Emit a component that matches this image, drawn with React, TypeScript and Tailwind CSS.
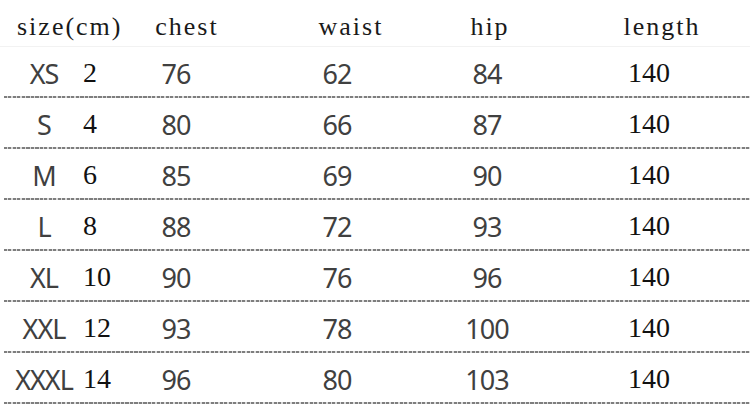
const rows = [
  { size: "XS", num: "2", chest: "76", waist: "62", hip: "84", length: "140" },
  { size: "S", num: "4", chest: "80", waist: "66", hip: "87", length: "140" },
  { size: "M", num: "6", chest: "85", waist: "69", hip: "90", length: "140" },
  { size: "L", num: "8", chest: "88", waist: "72", hip: "93", length: "140" },
  { size: "XL", num: "10", chest: "90", waist: "76", hip: "96", length: "140" },
  { size: "XXL", num: "12", chest: "93", waist: "78", hip: "100", length: "140" },
  { size: "XXXL", num: "14", chest: "96", waist: "80", hip: "103", length: "140" },
];

const sans = "font-['Noto_Sans',sans-serif] text-[27px] tracking-[-1px] text-[#404040]";
const serif = "font-['Liberation_Serif',serif] text-[28px] text-[#111]";

function Dashes() {
  return (
    <div className="ml-[4px] h-[2px] bg-[repeating-linear-gradient(90deg,#7e7e7e_0_3px,#dadada_3px_4.5px)]" />
  );
}

export default function App() {
  return (
    <div className="h-[404px] w-[750px] overflow-hidden bg-white">
      <div className="flex h-[47px] items-center border-b border-[#f2f2f2] pt-[8px] font-['Liberation_Serif',serif] text-[26px] leading-none tracking-[2px] text-[#1a1a1a]">
        <div className="w-[126px] pl-[17px]">size(cm)</div>
        <div className="w-[100px] pl-[22px] text-center">chest</div>
        <div className="w-[222px] pl-[28px] text-center">waist</div>
        <div className="w-[78px] pl-[6px] text-center">hip</div>
        <div className="w-[224px] pl-[48px] text-center">length</div>
      </div>
      {rows.map((r) => (
        <div key={r.size}>
          <div className="flex h-[49px] items-center pt-[3px] leading-none">
            <div className={`w-[80px] pl-2 text-center ${sans}`}>{r.size}</div>
            <div className={`w-[46px] pl-[3px] ${serif}`}>{r.num}</div>
            <div className={`w-[100px] text-center ${sans}`}>{r.chest}</div>
            <div className={`w-[222px] text-center ${sans}`}>{r.waist}</div>
            <div className={`w-[78px] text-center ${sans}`}>{r.hip}</div>
            <div className={`w-[224px] pl-[22px] text-center ${serif}`}>{r.length}</div>
          </div>
          <Dashes />
        </div>
      ))}
    </div>
  );
}
